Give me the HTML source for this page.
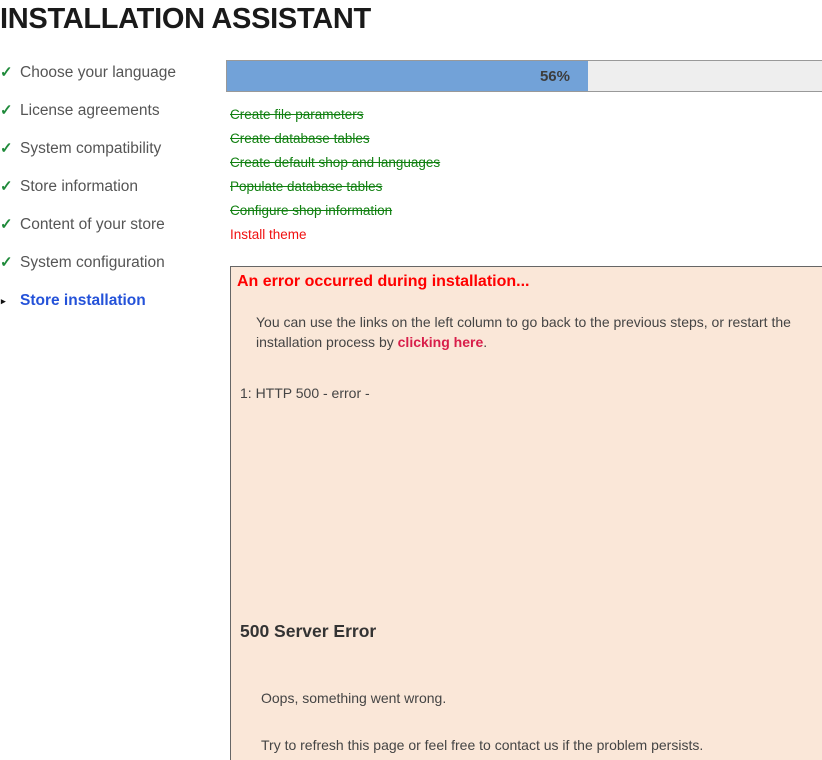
<!DOCTYPE html>
<html style="overflow:hidden;height:760px"><head><meta charset="utf-8"><style>
*{margin:0;padding:0;box-sizing:border-box}
html,body{overflow:hidden}
body{width:822px;height:760px;background:#fff;font-family:"Liberation Sans",sans-serif;position:relative;color:#444}
h1{position:absolute;left:0;top:2px;font-size:29px;font-weight:900;color:#1a1a1a;letter-spacing:-0.3px;line-height:34px}
.nav{position:absolute;left:0;top:61px}
.nav div{height:38px;line-height:24px;font-size:15.5px;color:#555;position:relative;padding-left:20px}
.nav .ck{position:absolute;left:0;top:0;color:#1f8a3a;font-weight:bold;font-size:15px}
.nav .cur{color:#2452d9;font-weight:bold}
.nav .ar{position:absolute;left:1px;top:0;font-size:9px;color:#111}
.bar{position:absolute;left:226px;top:60px;width:600px;height:32px;background:#eee;border:1px solid #999}
.fill{position:absolute;left:0;top:0;width:361px;height:30px;background:#72a2d8;text-align:right;padding-right:18px;line-height:32px;font-weight:bold;font-size:15px;color:#3d3d3d}
.steps{position:absolute;left:230px;top:103px;font-size:13.5px;line-height:24px}
.steps div{color:#118011;text-decoration:line-through}
.steps .red{color:#f01010;text-decoration:none}
.err{position:absolute;left:230px;top:266px;width:600px;height:520px;background:#fae7d8;border:1px solid #666}
.err h3{position:absolute;left:6px;top:6px;color:#f00;font-size:16px;font-weight:bold}
.p1{position:absolute;left:25px;top:45px;width:570px;font-size:14px;line-height:20px;color:#444}
.p1 b{color:#d81e4a}
.h{position:absolute;left:9px;top:118px;font-size:14px}
.e5{position:absolute;left:9px;top:354px;font-size:17.5px;font-weight:bold;color:#333}
.o1{position:absolute;left:30px;top:423px;font-size:14px}
.o2{position:absolute;left:30px;top:470px;font-size:14px}
</style></head><body>
<h1>INSTALLATION ASSISTANT</h1>
<div class="nav">
<div><span class="ck">✓</span>Choose your language</div>
<div><span class="ck">✓</span>License agreements</div>
<div><span class="ck">✓</span>System compatibility</div>
<div><span class="ck">✓</span>Store information</div>
<div><span class="ck">✓</span>Content of your store</div>
<div><span class="ck">✓</span>System configuration</div>
<div class="cur"><span class="ar">▸</span>Store installation</div>
</div>
<div class="bar"><div class="fill">56%</div></div>
<div class="steps">
<div>Create file parameters</div>
<div>Create database tables</div>
<div>Create default shop and languages</div>
<div>Populate database tables</div>
<div>Configure shop information</div>
<div class="red">Install theme</div>
</div>
<div class="err">
<h3>An error occurred during installation...</h3>
<div class="p1">You can use the links on the left column to go back to the previous steps, or restart the installation process by <b>clicking here</b>.</div>
<div class="h">1: HTTP 500 - error -</div>
<div class="e5">500 Server Error</div>
<div class="o1">Oops, something went wrong.</div>
<div class="o2">Try to refresh this page or feel free to contact us if the problem persists.</div>
</div>
</body></html>
